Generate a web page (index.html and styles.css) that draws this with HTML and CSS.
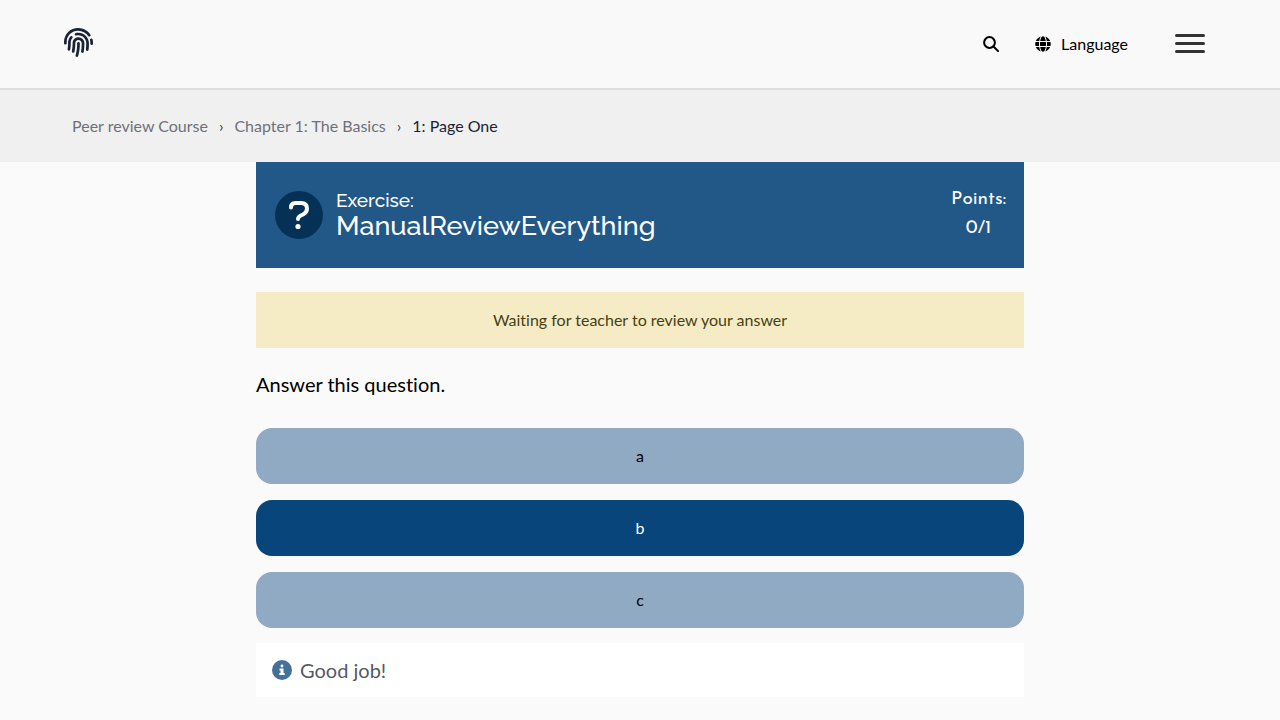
FILE: index.html
```html
<!DOCTYPE html>
<html lang="en">
<head>
<meta charset="utf-8">
<title>Page One</title>
<link rel="stylesheet" href="styles.css">
</head>
<body>
<header class="topbar">
  <a class="logo" href="#" aria-label="Home">
    <svg width="29" height="29" viewBox="0 0 512 512" fill="currentColor"><path d="M256.12 245.96c-13.25 0-24 10.74-24 24 1.14 72.25-8.14 141.9-27.7 211.55-2.73 9.72 2.15 30.49 23.12 30.49 10.48 0 20.11-6.92 23.09-17.52 13.53-47.91 31.04-125.41 29.48-224.52.01-13.25-10.73-24-23.99-24zm-.86-81.73C194 164.16 151.25 211.3 152.1 265.32c.75 47.94-3.75 95.91-13.37 142.55-2.69 12.98 5.67 25.69 18.64 28.36 13.05 2.67 25.67-5.66 28.36-18.64 10.34-50.09 15.17-101.58 14.37-153.02-.41-25.95 19.92-52.49 54.45-52.34 31.31.47 57.15 25.34 57.62 55.47.77 48.05-2.81 96.33-10.61 143.55-2.17 13.06 6.69 25.42 19.76 27.58 19.97 3.33 26.81-15.1 27.58-19.77 8.28-50.03 12.06-101.21 11.27-152.11-.88-55.8-47.94-101.88-104.91-102.72zm-110.69-19.78c-10.3-8.34-25.37-6.8-33.76 3.48-25.62 31.5-39.39 71.28-38.75 112 .59 37.58-2.47 75.27-9.11 112.05-2.34 13.05 6.31 25.53 19.36 27.89 20.11 3.5 27.07-14.81 27.89-19.36 7.19-39.84 10.5-80.66 9.86-121.33-.47-29.88 9.2-57.88 28-80.97 8.35-10.28 6.79-25.39-3.49-33.76zm109.47-62.33c-15.41-.41-30.87 1.44-45.78 4.97-12.89 3.06-20.87 15.98-17.83 28.89 3.06 12.89 16 20.83 28.89 17.83 11.05-2.61 22.47-3.77 34-3.75 75.43 1.13 137.73 61.5 138.88 134.58.59 37.88-1.28 76.11-5.58 113.63-1.5 13.17 7.95 25.08 21.11 26.58 16.72 1.95 25.51-11.88 26.58-21.11a929.06 929.06 0 0 0 5.89-119.85c-1.56-98.75-85.07-180.33-186.16-181.77zm252.07 121.45c-2.86-12.92-15.51-21.2-28.61-18.27-12.94 2.86-21.12 15.66-18.26 28.61 4.71 21.41 4.91 37.41 4.7 61.6-.11 13.27 10.55 24.09 23.8 24.2h.2c13.17 0 23.89-10.61 24-23.8.18-22.18.4-44.11-5.83-72.34zm-40.12-90.72C417.29 43.46 337.6 1.29 252.81.02 183.02-.82 118.47 24.91 70.46 72.94 24.09 119.37-.9 181.04.14 246.65l-.12 21.47c-.39 13.25 10.03 24.31 23.28 24.69.23.02.48.02.72.02 12.92 0 23.59-10.3 23.97-23.3l.16-23.64c-.83-52.5 19.16-101.86 56.28-139 38.76-38.8 91.34-59.67 147.68-58.86 69.45 1.03 134.73 35.56 174.62 92.39 7.61 10.86 22.56 13.45 33.42 5.86 10.84-7.62 13.46-22.59 5.84-33.43z"/></svg>
  </a>
  <div class="tools">
    <button class="tool" type="button" aria-label="Search">
      <svg width="16" height="16" viewBox="0 0 16 16" fill="none" stroke="currentColor" stroke-width="2"><circle cx="6.5" cy="6.5" r="5.4"/><path d="M10.5 10.5l4.6 4.6" stroke-linecap="round"/></svg>
    </button>
    <button class="tool" type="button">
      <svg width="16" height="16" viewBox="0 0 496 512" fill="currentColor"><path d="M336.500 160C322 70.700 287.800 8 248 8s-74 62.700-88.500 152h177zM152 256c0 22.200 1.200 43.500 3.300 64h185.300c2.100-20.500 3.300-41.800 3.300-64s-1.200-43.500-3.300-64H155.300c-2.100 20.500-3.300 41.800-3.300 64zm324.700-96c-28.600-67.900-86.500-120.400-158-141.600 24.400 33.800 41.200 84.700 50 141.600h108zM177.200 18.400C105.800 39.600 47.800 92.100 19.300 160h108c8.700-56.900 25.500-107.800 49.900-141.600zM487.400 192H372.700c2.100 21 3.300 42.500 3.300 64s-1.200 43-3.300 64h114.600c5.500-20.500 8.600-41.800 8.600-64s-3.100-43.500-8.500-64zM120 256c0-21.500 1.200-43 3.300-64H8.600C3.200 212.500 0 233.800 0 256s3.200 43.500 8.600 64h114.600c-2-21-3.200-42.500-3.200-64zm39.500 96c14.500 89.300 48.700 152 88.500 152s74-62.700 88.500-152h-177zm159.300 141.600c71.400-21.200 129.400-73.700 158-141.600h-108c-8.800 56.900-25.600 107.800-50 141.600zM19.300 352c28.600 67.900 86.500 120.400 158 141.600-24.400-33.800-41.200-84.700-50-141.600h-108z"/></svg>
      <span>Language</span>
    </button>
    <button class="menu" type="button" aria-label="Open menu"><span></span><span></span><span></span></button>
  </div>
</header>
<nav class="crumbs" aria-label="Breadcrumb">
  <a href="#">Peer review Course</a>
  <span class="sep">›</span>
  <a href="#">Chapter 1: The Basics</a>
  <span class="sep">›</span>
  <a class="current" href="#" aria-current="page">1: Page One</a>
</nav>
<main class="content">
  <section class="exercise">
    <svg class="badge" width="48" height="48" viewBox="0 0 48 48" fill="none"><circle cx="24" cy="24" r="24" fill="#063157"/><path d="M16 16.500Q16 12 20.500 12H26Q32 12 32 17.500Q32 21.500 28 23.500Q23 25.500 23 28" stroke="#fff" stroke-width="4" stroke-linecap="round"/><circle cx="23" cy="35.500" r="2.600" fill="#fff"/></svg>
    <h1 class="title"><span class="kind">Exercise:</span>ManualReviewEverything</h1>
    <div class="points"><span>Points:</span><span>0/1</span></div>
  </section>
  <div class="notice" role="status">Waiting for teacher to review your answer</div>
  <p class="question">Answer this question.</p>
  <div class="options">
    <button class="option" type="button">a</button>
    <button class="option selected" type="button">b</button>
    <button class="option" type="button">c</button>
  </div>
  <div class="feedback">
    <svg width="20" height="20" viewBox="0 0 20 20"><circle cx="10" cy="10" r="10" fill="#44719a"/><circle cx="10" cy="6" r="1.400" fill="#fff"/><path d="M7.500 8.500h4v4.500h1.200v2H7.300v-2h1.200v-2.500h-1z" fill="#fff"/></svg>
    <span>Good job!</span>
  </div>
</main>
</body>
</html>
```
FILE: styles.css
```css
* { box-sizing: border-box; }
body {
  margin: 0;
  background: #fafafa;
  color: #000;
  font: 16px/24px Lato, sans-serif;
  font-variant-ligatures: none;
}
button {
  border: 0;
  background: none;
  color: inherit;
  font: inherit;
  font-variant-ligatures: none;
  cursor: pointer;
}
a { color: inherit; text-decoration: none; }
svg { display: block; flex: none; }
.topbar {
  display: flex;
  align-items: center;
  justify-content: space-between;
  min-height: 90px;
  padding: 0 75px 3px 64px;
  background: #f9f9f9;
  border-bottom: 2px solid #dedede;
}
.logo { color: #1a2333; }
.tools { display: flex; align-items: center; }
.tool {
  display: flex;
  align-items: center;
  gap: 10px;
  padding: 3px 0 0;
  margin-right: 36px;
}
.menu {
  display: flex;
  flex-direction: column;
  gap: 5px;
  width: 30px;
  padding: 1px 0 0;
  margin-left: 11px;
}
.menu span {
  height: 3px;
  border-radius: 2px;
  background: #333;
}
.crumbs {
  display: flex;
  align-items: center;
  gap: 11px;
  min-height: 72px;
  padding: 0 72px;
  background: #f0f0f0;
  color: #6e7079;
}
.sep { color: #404040; }
.crumbs .current { color: #1a2333; }
.content {
  width: 60%;
  margin: 0 auto;
  padding-bottom: 23px;
}
.exercise {
  display: flex;
  align-items: flex-start;
  padding: 24px 18px 25px 19px;
  background: #215887;
  color: #fff;
}
.badge { margin-top: 5px; }
.title {
  flex: 1;
  margin: 4px 0 0 13px;
  font: 500 27px/32px Raleway, Lato, sans-serif;
}
.kind {
  display: block;
  font-size: 19px;
  line-height: 20px;
}
.points {
  display: flex;
  flex-direction: column;
  align-items: center;
  gap: 1px;
  font: 400 19px/28px "Josefin Sans", Lato, sans-serif;
}
.notice {
  margin-top: 24px;
  padding: 16px;
  background: #f5ecc6;
  color: #493f13;
  text-align: center;
}
.question {
  margin: 21px 0 29px;
  font-size: 20px;
  line-height: 30px;
}
.options {
  display: flex;
  flex-direction: column;
  gap: 16px;
}
.option {
  padding: 16px;
  border-radius: 16px;
  background: #91aac4;
}
.option.selected { background: #08457a; color: #fff; }
.feedback {
  display: flex;
  align-items: center;
  gap: 8px;
  margin-top: 15px;
  padding: 12px 16px;
  background: #fff;
  color: #535a66;
  font-size: 20px;
  line-height: 30px;
}
```
